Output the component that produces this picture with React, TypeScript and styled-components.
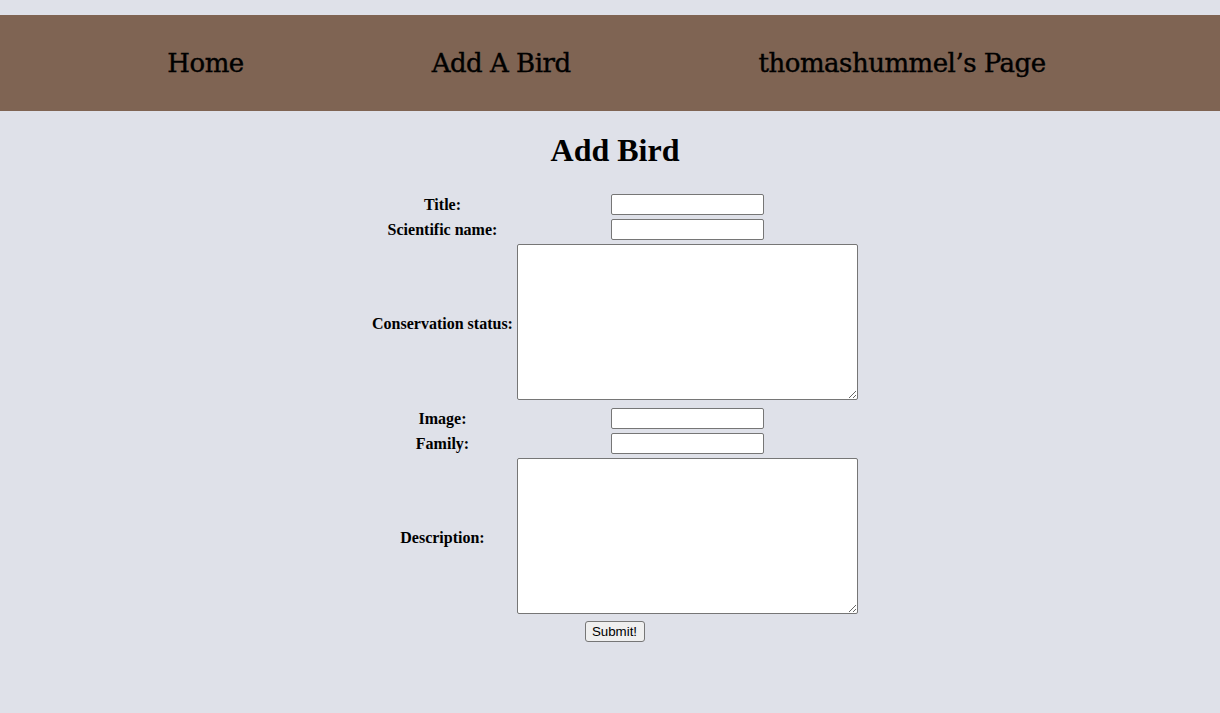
import React from "react";
import styled, { createGlobalStyle } from "styled-components";

const Global = createGlobalStyle`
  html, body {
    margin: 0;
    padding: 0;
    background: #dfe1e9;
    font-family: "Liberation Serif", "Times New Roman", serif;
    color: #000;
  }
`;

const Nav = styled.nav`
  margin-top: 15px;
  height: 96px;
  background: #7f6453;
  display: flex;
  align-items: center;
  justify-content: center;
  gap: 188px;
  padding-right: 7px;
`;

const NavLink = styled.a`
  font-family: "DejaVu Serif", serif;
  font-size: 26px;
  color: #000;
  text-decoration: none;
  letter-spacing: -0.5px;
  -webkit-text-stroke: 0.4px #000;
`;

const Main = styled.main`
  padding-left: 10px;
`;

const Heading = styled.h1`
  text-align: center;
  font-size: 32px;
  margin: 21px 0 22px;
  font-weight: bold;
`;

const Table = styled.table`
  margin: 0 auto;
  border-spacing: 2px;
  font-size: 16px;
`;

const Label = styled.th`
  padding: 1px;
  text-align: center;
  font-weight: bold;
`;

const Cell = styled.td`
  padding: 1px;
  text-align: center;
`;

const TextInput = styled.input`
  width: 153px;
  height: 21px;
  box-sizing: border-box;
  font-family: "Liberation Sans", Arial, sans-serif;
  font-size: 13.33px;
  border: 1px solid #767676;
  border-radius: 2px;
  background: #fff;
  padding: 1px 2px;
`;

const Area = styled.textarea`
  width: 341px;
  height: 156px;
  box-sizing: border-box;
  border: 1px solid #767676;
  border-radius: 2px;
  background: #fff;
  font-family: "Liberation Mono", monospace;
  font-size: 13.33px;
  padding: 2px;
  vertical-align: baseline;
`;

const Submit = styled.button`
  font-family: "Liberation Sans", Arial, sans-serif;
  font-size: 13.33px;
  height: 21px;
  margin-top: -1px;
  padding: 1px 7px 1px 6px;
  border: 1px solid #767676;
  border-radius: 3px;
  background: #efefef;
  color: #000;
`;

export default function App() {
  return (
    <>
      <Global />
      <Nav>
        <NavLink href="#">Home</NavLink>
        <NavLink href="#">Add A Bird</NavLink>
        <NavLink href="#">thomashummel’s Page</NavLink>
      </Nav>
      <Main>
        <Heading>Add Bird</Heading>
        <form onSubmit={(e) => e.preventDefault()}>
          <Table>
            <tbody>
              <tr>
                <Label>Title:</Label>
                <Cell><TextInput type="text" /></Cell>
              </tr>
              <tr>
                <Label>Scientific name:</Label>
                <Cell><TextInput type="text" /></Cell>
              </tr>
              <tr>
                <Label>Conservation status:</Label>
                <Cell><Area /></Cell>
              </tr>
              <tr>
                <Label>Image:</Label>
                <Cell><TextInput type="text" /></Cell>
              </tr>
              <tr>
                <Label>Family:</Label>
                <Cell><TextInput type="text" /></Cell>
              </tr>
              <tr>
                <Label>Description:</Label>
                <Cell><Area /></Cell>
              </tr>
              <tr>
                <Cell colSpan={2}><Submit type="submit">Submit!</Submit></Cell>
              </tr>
            </tbody>
          </Table>
        </form>
      </Main>
    </>
  );
}
